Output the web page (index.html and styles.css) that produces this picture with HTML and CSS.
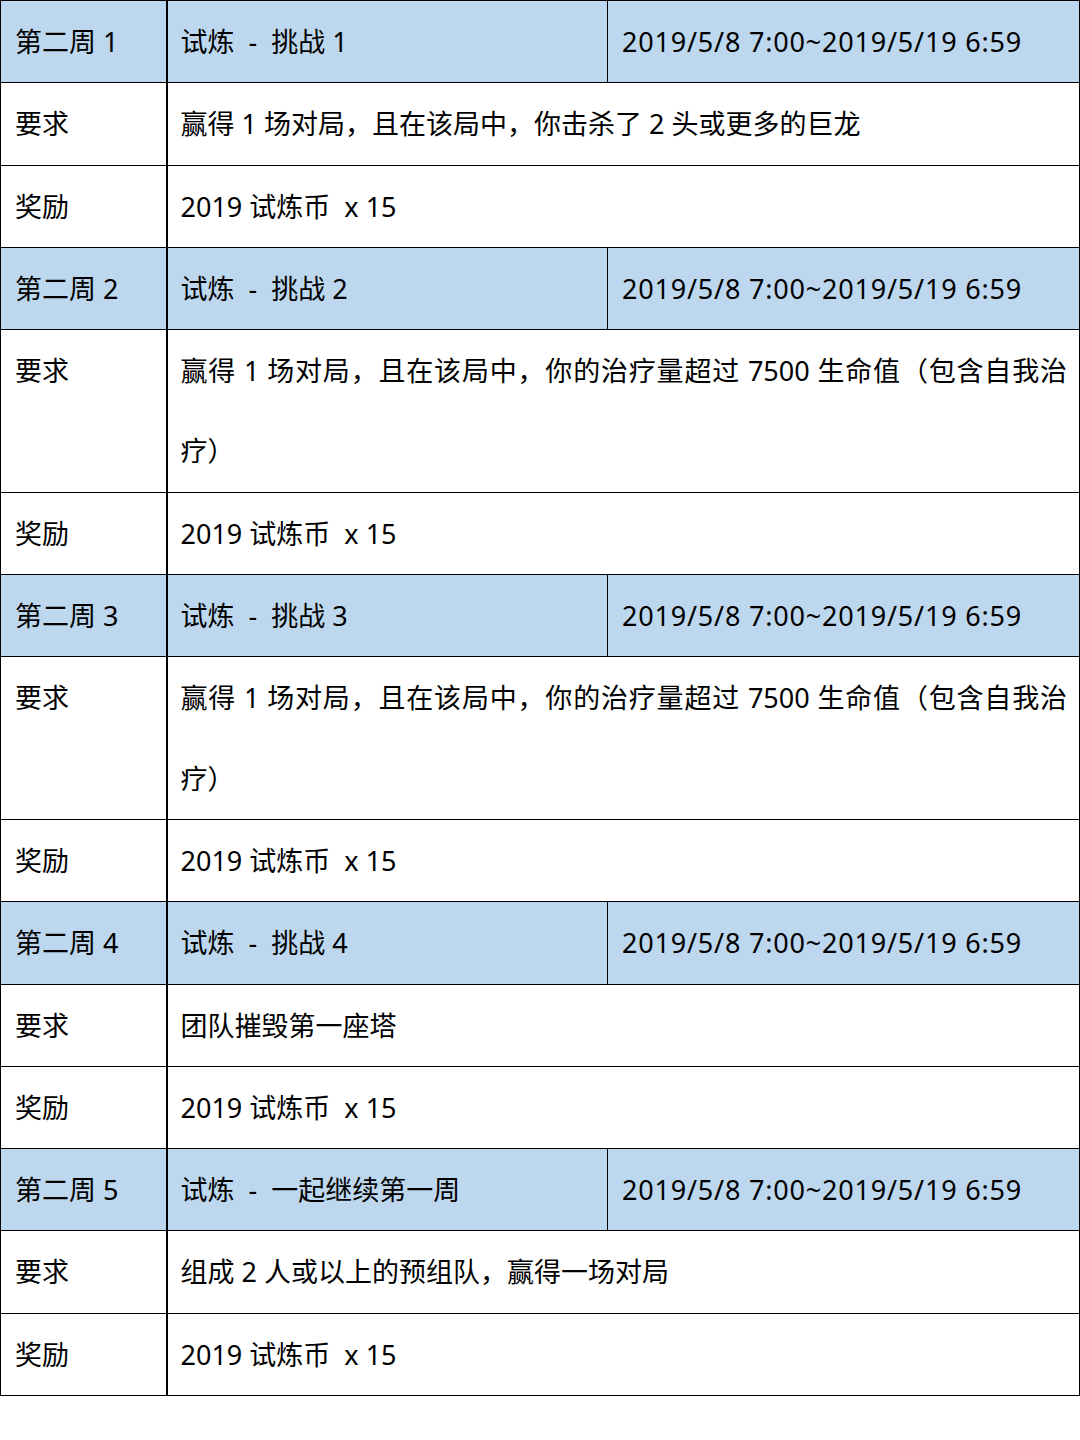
FILE: index.html
```html
<!DOCTYPE html>
<html lang="zh-CN">
<head>
<meta charset="utf-8">
<title>第二周 试炼</title>
<link rel="stylesheet" href="styles.css">
</head>
<body>
<table class="sheet">
  <colgroup>
    <col class="c1"><col class="c2"><col class="c3">
  </colgroup>
  <tbody>
    <tr class="head"><td>第二周 1</td><td>试炼 &nbsp;- &nbsp;挑战 1</td><td class="date">2019/5/8 7:00~2019/5/19 6:59</td></tr>
    <tr><td>要求</td><td colspan="2">赢得 1 场对局，且在该局中，你击杀了 2 头或更多的巨龙</td></tr>
    <tr><td>奖励</td><td colspan="2">2019 试炼币 &nbsp;x 15</td></tr>

    <tr class="head"><td>第二周 2</td><td>试炼 &nbsp;- &nbsp;挑战 2</td><td class="date">2019/5/8 7:00~2019/5/19 6:59</td></tr>
    <tr><td>要求</td><td colspan="2" class="just">赢得 1 场对局，且在该局中，你的治疗量超过 7500 生命值（包含自我治疗）</td></tr>
    <tr><td>奖励</td><td colspan="2">2019 试炼币 &nbsp;x 15</td></tr>

    <tr class="head"><td>第二周 3</td><td>试炼 &nbsp;- &nbsp;挑战 3</td><td class="date">2019/5/8 7:00~2019/5/19 6:59</td></tr>
    <tr><td>要求</td><td colspan="2" class="just">赢得 1 场对局，且在该局中，你的治疗量超过 7500 生命值（包含自我治疗）</td></tr>
    <tr><td>奖励</td><td colspan="2">2019 试炼币 &nbsp;x 15</td></tr>

    <tr class="head"><td>第二周 4</td><td>试炼 &nbsp;- &nbsp;挑战 4</td><td class="date">2019/5/8 7:00~2019/5/19 6:59</td></tr>
    <tr><td>要求</td><td colspan="2">团队摧毁第一座塔</td></tr>
    <tr><td>奖励</td><td colspan="2">2019 试炼币 &nbsp;x 15</td></tr>

    <tr class="head"><td>第二周 5</td><td>试炼 &nbsp;- &nbsp;一起继续第一周</td><td class="date">2019/5/8 7:00~2019/5/19 6:59</td></tr>
    <tr><td>要求</td><td colspan="2">组成 2 人或以上的预组队，赢得一场对局</td></tr>
    <tr><td>奖励</td><td colspan="2">2019 试炼币 &nbsp;x 15</td></tr>
  </tbody>
</table>
</body>
</html>
```
FILE: styles.css
```css
html, body {
  margin: 0;
  padding: 0;
  background: #ffffff;
}
body {
  font-family: "Noto Sans", "Noto Sans CJK SC", sans-serif;
  font-size: 27px;
  color: #000000;
}
.sheet {
  width: 1079px;
  border-collapse: collapse;
  table-layout: fixed;
  border: 1px solid #000;
}
.c1 { width: 166px; }
.c2 { width: 441px; }
.c3 { width: 472px; }
.sheet td {
  border: 1px solid #000;
  padding: 1px 12px 0 13px;
  line-height: 80.3px;
  vertical-align: top;
  white-space: normal;
}
.sheet td:first-child {
  border-right: 2px solid #000;
  padding-left: 14px;
}
.head td {
  background: #bdd7ee;
}
.sheet td.date {
  padding-left: 14px;
  letter-spacing: 0.8px;
}
.just {
  text-align: justify;
}
```
